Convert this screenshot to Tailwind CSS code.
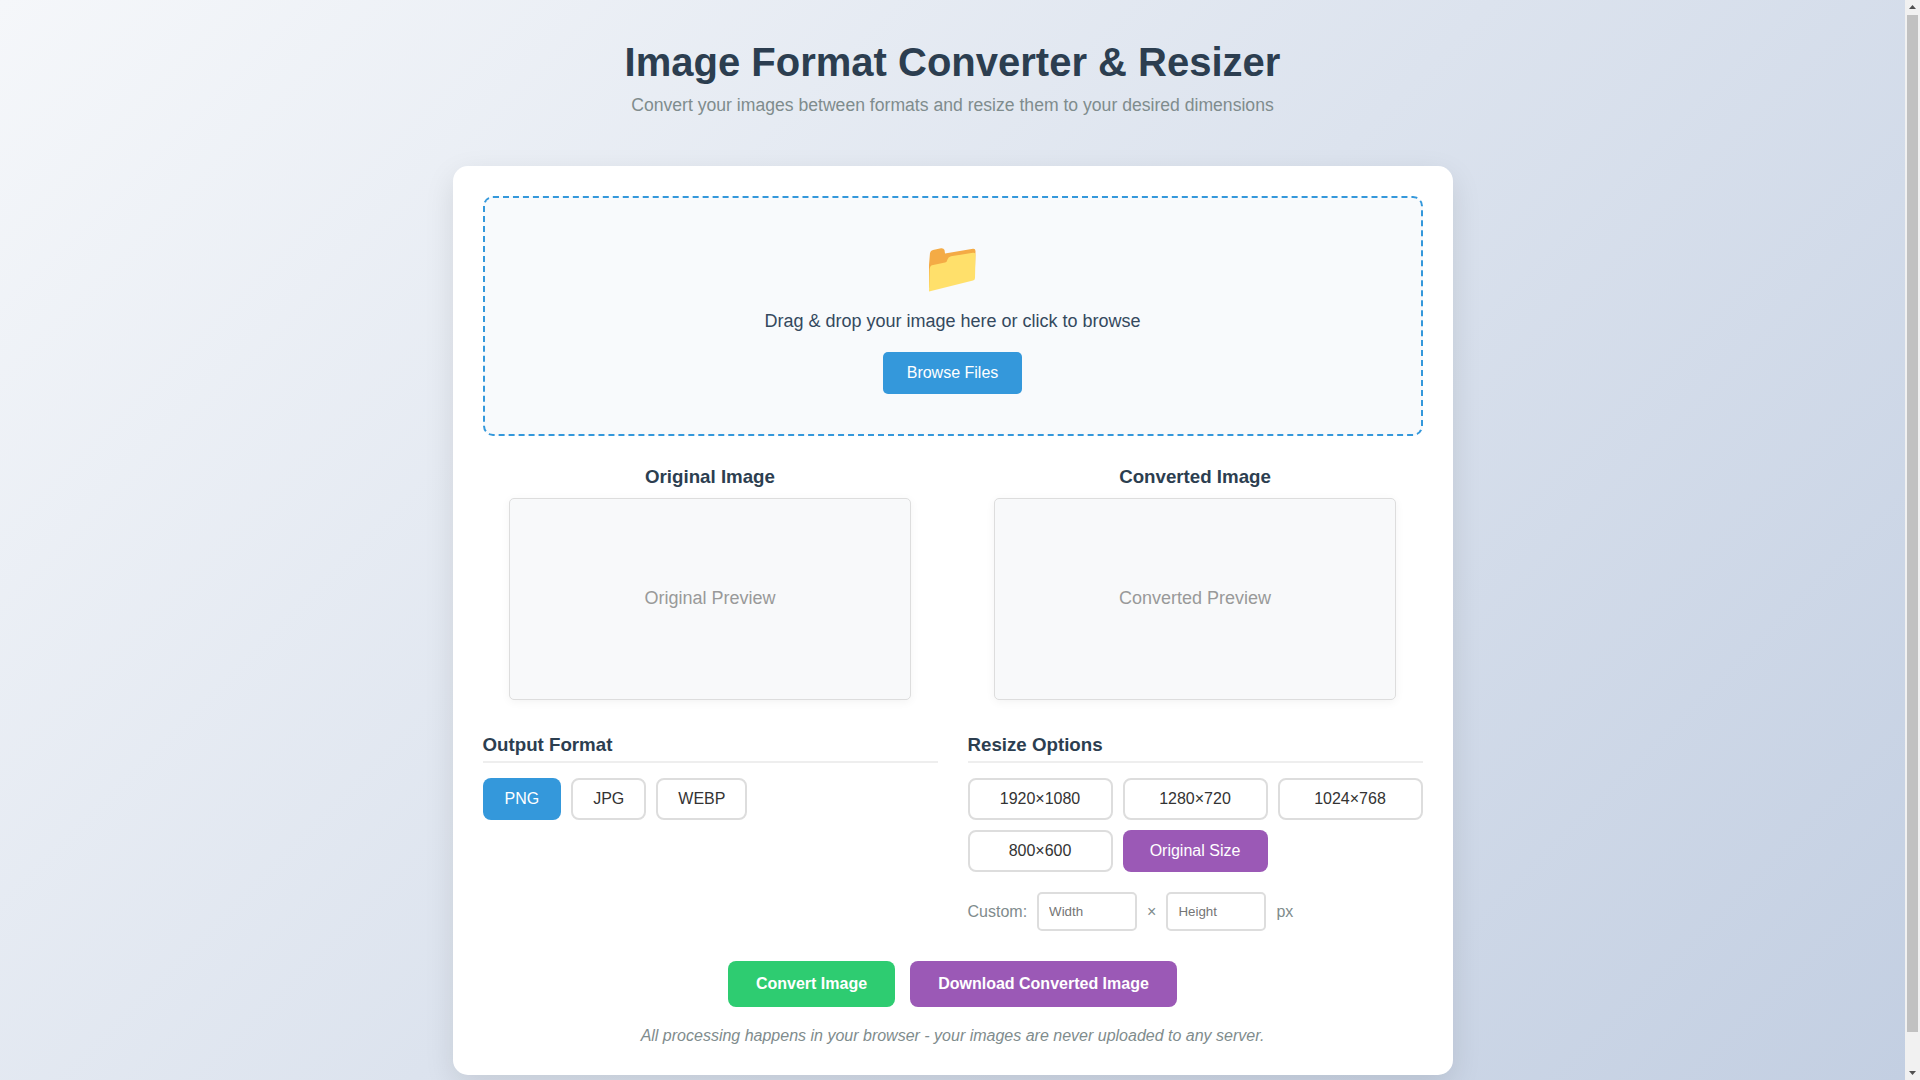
<!DOCTYPE html>
<html lang="en">
<head>
    <meta charset="UTF-8">
    <meta name="viewport" content="width=device-width, initial-scale=1.0">
    <title>Image Format Converter &amp; Resizer</title>
    <script src="https://cdn.jsdelivr.net/npm/@tailwindcss/browser@4"></script>
</head>
<body class="h-[1080px] overflow-hidden flex font-['Liberation_Sans',Arial,sans-serif] text-[#333]">

    <!-- Page -->
    <div class="w-[1905px] h-[1080px] overflow-hidden bg-[linear-gradient(135deg,#f5f7fa_0%,#c3cfe2_100%)] px-5 pt-10">
        <div class="w-[1000px] mx-auto">

            <!-- Header -->
            <header class="text-center mb-[51px]">
                <h1 class="text-[40px] leading-[45px] font-bold text-[#2c3e50] mb-[10px]">Image Format Converter &amp; Resizer</h1>
                <p class="text-[17.6px] leading-5 text-[#7f8c8d]">Convert your images between formats and resize them to your desired dimensions</p>
            </header>

            <!-- Card -->
            <main class="bg-white rounded-[15px] shadow-[0_10px_30px_rgba(0,0,0,0.1)] pt-[30px] px-[30px] pb-[27px]">

                <!-- Drop zone -->
                <div class="h-[240px] border-2 border-dashed border-[#3498db] rounded-[10px] bg-[#f8fafc] flex flex-col items-center pt-[50px]">
                    <svg class="w-[47px] h-[44px]" viewBox="0 0 47 44">
                        <path d="M0 17 L1 5 Q1.500 2.500 4 2 L12 0.300 Q14.500 0 15.500 2 L16 5.500 L44 0.700 Q46.500 0.500 46.500 3 L46 20 L0 40 Z" fill="#f4ab45"/>
                        <path d="M0 43.500 L0.600 22 Q0.800 18 3 17.300 L16 14.500 Q18 14 18.500 11.500 Q19 9 22 8.300 L44 4.700 Q46.500 4.300 46.500 7 L46 30 Q46 32 44 32.500 Z" fill="#ffe06b"/>
                    </svg>
                    <p class="mt-[19px] text-lg leading-[21px] text-[#34495e]">Drag &amp; drop your image here or click to browse</p>
                    <button class="mt-5 w-[139px] h-[42px] rounded-[5px] bg-[#3498db] text-white text-base">Browse Files</button>
                </div>

                <!-- Previews -->
                <div class="grid grid-cols-2 gap-[30px] mt-[30px]">
                    <div class="flex flex-col items-center">
                        <h3 class="text-[18.72px] leading-[22px] font-bold text-[#2c3e50] mb-[10px]">Original Image</h3>
                        <div class="w-[402px] h-[202px] border border-[#ddd] rounded-[5px] bg-[#f8f9fa] shadow-[0_2px_10px_rgba(0,0,0,0.05)] flex items-center justify-center pb-0.5 text-lg text-[#999]">Original Preview</div>
                    </div>
                    <div class="flex flex-col items-center">
                        <h3 class="text-[18.72px] leading-[22px] font-bold text-[#2c3e50] mb-[10px]">Converted Image</h3>
                        <div class="w-[402px] h-[202px] border border-[#ddd] rounded-[5px] bg-[#f8f9fa] shadow-[0_2px_10px_rgba(0,0,0,0.05)] flex items-center justify-center pb-0.5 text-lg text-[#999]">Converted Preview</div>
                    </div>
                </div>

                <!-- Options -->
                <div class="grid grid-cols-2 gap-[30px] mt-[34px]">
                    <section>
                        <h3 class="text-[18.72px] leading-[22px] font-bold text-[#2c3e50] border-b-2 border-[#eee] pb-[5px] mb-[15px]">Output Format</h3>
                        <div class="flex gap-[10px]">
                            <button class="h-[42px] px-[22px] rounded-lg bg-[#3498db] text-white text-base">PNG</button>
                            <button class="h-[42px] px-[20px] rounded-lg border-2 border-[#ddd] bg-white text-base">JPG</button>
                            <button class="h-[42px] px-[20px] rounded-lg border-2 border-[#ddd] bg-white text-base">WEBP</button>
                        </div>
                    </section>
                    <section>
                        <h3 class="text-[18.72px] leading-[22px] font-bold text-[#2c3e50] border-b-2 border-[#eee] pb-[5px] mb-[15px]">Resize Options</h3>
                        <div class="grid grid-cols-3 gap-[10px]">
                            <button class="h-[42px] rounded-lg border-2 border-[#ddd] bg-white text-base">1920×1080</button>
                            <button class="h-[42px] rounded-lg border-2 border-[#ddd] bg-white text-base">1280×720</button>
                            <button class="h-[42px] rounded-lg border-2 border-[#ddd] bg-white text-base">1024×768</button>
                            <button class="h-[42px] rounded-lg border-2 border-[#ddd] bg-white text-base">800×600</button>
                            <button class="h-[42px] rounded-lg bg-[#9b59b6] text-white text-base">Original Size</button>
                        </div>
                        <div class="flex items-center gap-[10px] mt-5 text-base text-[#7f8c8d]">
                            <span>Custom:</span>
                            <input class="w-[100px] h-[39px] px-[10px] border-2 border-[#ddd] rounded-[5px] text-[13.33px] placeholder:text-[#757575]" placeholder="Width">
                            <span>×</span>
                            <input class="w-[100px] h-[39px] px-[10px] border-2 border-[#ddd] rounded-[5px] text-[13.33px] placeholder:text-[#757575]" placeholder="Height">
                            <span>px</span>
                        </div>
                    </section>
                </div>

                <!-- Actions -->
                <div class="flex justify-center gap-[15px] mt-[30px]">
                    <button class="w-[167px] h-[46px] rounded-lg bg-[#2ecc71] text-white text-base font-bold">Convert Image</button>
                    <button class="w-[267px] h-[46px] rounded-lg bg-[#9b59b6] text-white text-base font-bold">Download Converted Image</button>
                </div>
                <p class="mt-[17px] text-center text-base italic text-[#7f8c8d]">All processing happens in your browser - your images are never uploaded to any server.</p>
            </main>
        </div>
    </div>

    <!-- Scrollbar -->
    <div class="w-[15px] h-[1080px] bg-[#f1f1f1] flex flex-col items-center shrink-0">
        <svg class="w-[15px] h-[15px]" viewBox="0 0 15 15"><path d="M7.500 5 L11 9 H4 Z" fill="#505050"/></svg>
        <div class="w-[11px] h-[1017px] bg-[#c1c1c1]"></div>
        <div class="flex-1"></div>
        <svg class="w-[15px] h-[15px]" viewBox="0 0 15 15"><path d="M7.500 10 L11 6 H4 Z" fill="#505050"/></svg>
    </div>
</body>
</html>
